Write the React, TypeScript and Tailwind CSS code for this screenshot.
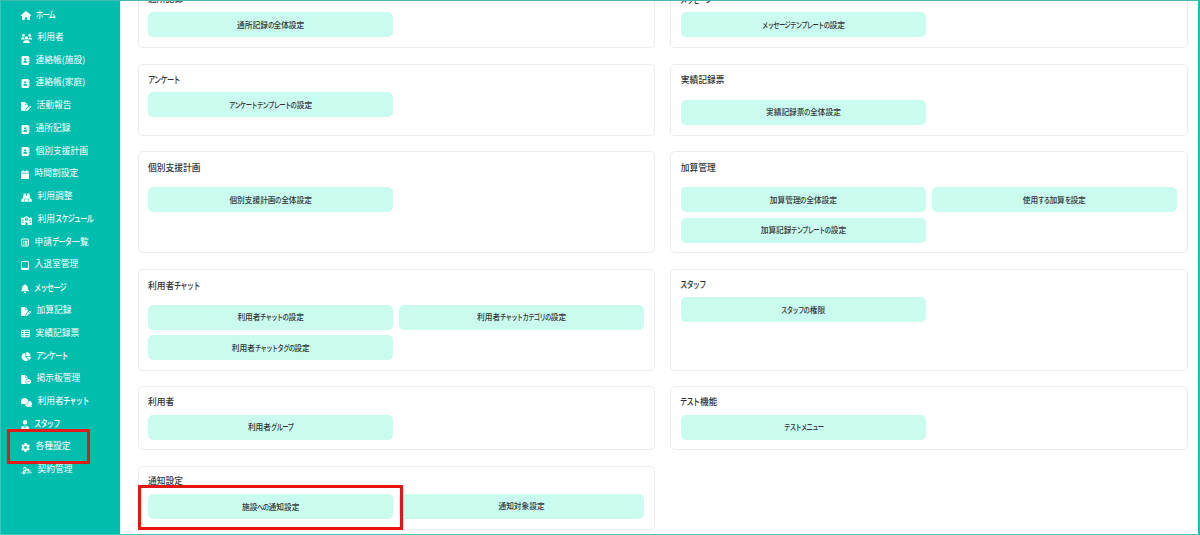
import type { IconType } from 'react-icons'
import {
  FaAddressBook,
  FaBell,
  FaCalendar,
  FaChartPie,
  FaComments,
  FaFileCircleCheck,
  FaFilePen,
  FaGear,
  FaHouse,
  FaSchool,
  FaSignature,
  FaUsers,
  FaUserTie,
} from 'react-icons/fa6'

interface IconProps {
  className?: string
}

interface MenuItem {
  label: string
  icon: IconType | ((props: IconProps) => React.ReactNode)
  iconClass: string
  active?: boolean
}

interface Section {
  title: string
  buttons: string[]
  wide?: boolean
  marked?: boolean
}

function ListIcon({ className }: IconProps) {
  return (
    <svg viewBox="0 0 16 16" className={className} fill="none" stroke="currentColor">
      <rect x="1" y="1" width="14" height="14" rx="1.5" strokeWidth="2" />
      <path d="M3.5 5.5h2M3.5 8.5h2M3.5 11.5h2M7 5.5h6M7 8.5h6M7 11.5h6" strokeWidth="2.2" />
    </svg>
  )
}

function TableIcon({ className }: IconProps) {
  return (
    <svg viewBox="0 0 18 16" className={className} fill="none" stroke="currentColor" strokeWidth="2.1">
      <rect x="1" y="1.5" width="16" height="13" rx="2" />
      <path d="M1 5.8h16M1 10.2h16M6.5 1.5v13" />
    </svg>
  )
}

function TabletIcon({ className }: IconProps) {
  return (
    <svg viewBox="0 0 16 18" className={className} fill="none" stroke="currentColor">
      <rect x="1" y="1" width="14" height="16" rx="1.5" strokeWidth="2" />
      <path d="M1 15.2h14" strokeWidth="3" />
    </svg>
  )
}

function GroupIcon({ className }: IconProps) {
  return (
    <svg viewBox="0 0 22 18" className={className} fill="currentColor">
      <circle cx="7.5" cy="3.5" r="3" />
      <circle cx="14.5" cy="3.5" r="3" />
      <path d="M4.500 6h13l1.500 5.500H3z" />
      <path d="M3.500 11h3l1 6.500H0.500v-3.500a3 3 0 0 1 3-3zM8.500 12h5l.8 5.500H7.700zM15.500 11h3a3 3 0 0 1 3 3v3.500h-7z" />
    </svg>
  )
}

const menu: MenuItem[] = [
  { label: 'ホーム', icon: FaHouse, iconClass: 'w-[10px]' },
  { label: '利用者', icon: FaUsers, iconClass: 'w-[11px]' },
  { label: '連絡帳(施設)', icon: FaAddressBook, iconClass: 'w-[9px]' },
  { label: '連絡帳(家庭)', icon: FaAddressBook, iconClass: 'w-[9px]' },
  { label: '活動報告', icon: FaFilePen, iconClass: 'w-[10px]' },
  { label: '通所記録', icon: FaAddressBook, iconClass: 'w-[9px]' },
  { label: '個別支援計画', icon: FaAddressBook, iconClass: 'w-[9px]' },
  { label: '時間割設定', icon: FaCalendar, iconClass: 'w-[8px]' },
  { label: '利用調整', icon: GroupIcon, iconClass: 'w-[11px]' },
  { label: '利用スケジュール', icon: FaSchool, iconClass: 'w-[11px]' },
  { label: '申請データ一覧', icon: ListIcon, iconClass: 'w-[8px]' },
  { label: '入退室管理', icon: TabletIcon, iconClass: 'w-[8px]' },
  { label: 'メッセージ', icon: FaBell, iconClass: 'w-[8px]' },
  { label: '加算記録', icon: FaFilePen, iconClass: 'w-[10px]' },
  { label: '実績記録票', icon: TableIcon, iconClass: 'w-[9px]' },
  { label: 'アンケート', icon: FaChartPie, iconClass: 'w-[10px]' },
  { label: '掲示板管理', icon: FaFileCircleCheck, iconClass: 'w-[10px]' },
  { label: '利用者チャット', icon: FaComments, iconClass: 'w-[11px]' },
  { label: 'スタッフ', icon: FaUserTie, iconClass: 'w-[8px]' },
  { label: '各種設定', icon: FaGear, iconClass: 'w-[9px]', active: true },
  { label: '契約管理', icon: FaSignature, iconClass: 'w-[11px]' },
]

const sections: Section[] = [
  { title: '通所記録', buttons: ['通所記録の全体設定'] },
  { title: 'メッセージ', buttons: ['メッセージテンプレートの設定'] },
  { title: 'アンケート', buttons: ['アンケートテンプレートの設定'] },
  { title: '実績記録票', buttons: ['実績記録票の全体設定'], wide: true },
  { title: '個別支援計画', buttons: ['個別支援計画の全体設定'], wide: true },
  { title: '加算管理', buttons: ['加算管理の全体設定', '使用する加算を設定', '加算記録テンプレートの設定'], wide: true },
  { title: '利用者チャット', buttons: ['利用者チャットの設定', '利用者チャットカテゴリの設定', '利用者チャットタグの設定'], wide: true },
  { title: 'スタッフ', buttons: ['スタッフの権限'] },
  { title: '利用者', buttons: ['利用者グループ'] },
  { title: 'テスト機能', buttons: ['テストメニュー'] },
  { title: '通知設定', buttons: ['施設への通知設定', '通知対象設定'], marked: true },
]

// Kana are set narrower than kanji, as in a UI face
const KANA_WIDTH = 0.73

function Label({ text }: { text: string }) {
  const runs = text.match(/[\u3040-\u30ff]+|[^\u3040-\u30ff]+/g) ?? []
  return (
    <span className="inline-flex items-baseline whitespace-nowrap">
      {runs.map((run, i) =>
        /[\u3040-\u30ff]/.test(run) ? (
          <span key={i} className="inline-block" style={{ width: `${run.length * KANA_WIDTH}em` }}>
            <span className="-ml-[0.03em] inline-block origin-left scale-x-[0.75] text-[1.1em] font-medium tracking-[-0.11em]">
              {run}
            </span>
          </span>
        ) : (
          <span key={i}>{run}</span>
        ),
      )}
    </span>
  )
}

function Sidebar() {
  return (
    <nav className="w-[120px] shrink-0 bg-[#00bdae] pt-[3px] pl-[21px] text-white">
      {menu.map(({ label, icon: Icon, iconClass, active }) => (
        <div key={label} className="relative flex h-[22.75px] items-center gap-[5.5px] text-[8.75px] leading-none">
          <Icon className={`h-[9px] shrink-0 translate-y-px ${iconClass}`} />
          <Label text={label} />
          {active && <span className="absolute -top-[6px] -left-[14px] h-[35px] w-[83px] border-3 border-[#e01b14]" />}
        </div>
      ))}
    </nav>
  )
}

function SectionCard({ title, buttons, wide, marked }: Section) {
  return (
    <section className="rounded-[5px] border border-[#ececec] px-[9.5px] pb-[10px]">
      <h2
        className={`flex items-center text-[8.75px] leading-none font-medium text-[#333] ${
          wide ? 'mb-[5px] h-[30px]' : 'h-[27.5px]'
        }`}
      >
        <span className={wide ? 'pt-[2px]' : 'pt-[3px]'}>
          <Label text={title} />
        </span>
      </h2>
      <div className="grid grid-cols-2 gap-[5.5px]">
        {buttons.map((text, i) => (
          <button
            key={text}
            className={`relative h-[25px] rounded-[5px] bg-[#c9fbef] pb-[0.5px] text-[7.7px] leading-none font-medium text-[#333] ${
              marked && i === 0 ? 'z-10' : ''
            }`}
          >
            <Label text={text} />
            {marked && i === 0 && (
              <span className="absolute -top-[9.5px] -left-[10px] h-[45px] w-[265px] border-3 border-[#e81410]" />
            )}
          </button>
        ))}
      </div>
    </section>
  )
}

export default function App() {
  return (
    <div className="relative flex h-[535px] w-[1200px] overflow-hidden bg-white font-['Noto_Sans_CJK_JP',sans-serif]">
      <Sidebar />
      <main className="min-w-0 flex-1 border-l border-[#dffffb] pr-[12.5px] pl-[16.5px]">
        <div className="-mt-[16.5px] grid grid-cols-2 grid-rows-[64.5px_72px_102px_102px_64px_64px] gap-x-[15.5px] gap-y-[15.5px]">
          {sections.map((s) => (
            <SectionCard key={s.title} {...s} />
          ))}
        </div>
      </main>
      <div className="pointer-events-none absolute inset-0 border-t border-r-2 border-b border-l border-t-[#48b8b0] border-r-[#1fbdb0] border-b-[#48c4bb] border-l-[#35c9bd]" />
    </div>
  )
}
